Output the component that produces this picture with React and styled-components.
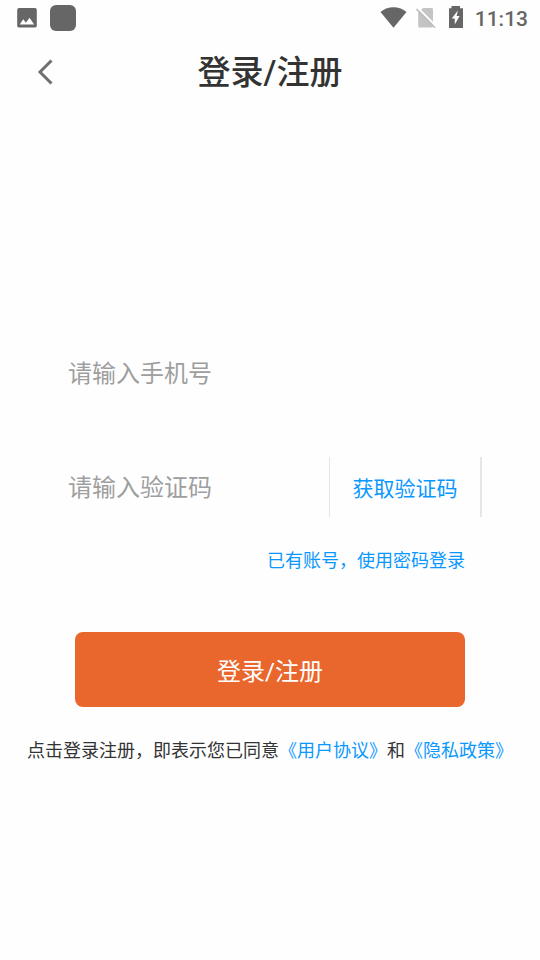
import { useState } from "react";
import styled, { createGlobalStyle } from "styled-components";

//STYLE

const GlobalStyle = createGlobalStyle`
  * {
    box-sizing: border-box;
  }
  body {
    margin: 0;
    background: #fefefe;
    color: #333;
    font-family: Roboto, "Noto Sans CJK SC", sans-serif;
  }
  button {
    border: none;
    padding: 0;
    background: none;
    font-family: inherit;
    cursor: pointer;
  }
`;

const Page = styled.div`
  display: flex;
  flex-direction: column;
  min-height: 100vh;
`;

const StatusBar = styled.div`
  display: flex;
  align-items: center;
  justify-content: space-between;
  height: 36px;
  padding: 0 12px 0 16px;
  color: #666;
`;

const StatusGroup = styled.div`
  display: flex;
  align-items: center;
  gap: ${({ $gap }) => $gap}px;
`;

const AppBadge = styled.span`
  width: 26px;
  height: 26px;
  border-radius: 6px;
  background: #666;
`;

const Clock = styled.span`
  padding-top: 2px;
  font-size: 21px;
  font-weight: 500;
  line-height: 34px;
`;

const Header = styled.header`
  display: grid;
  grid-template-columns: 90px 1fr 90px;
  align-items: center;
  height: 72px;
`;

const BackButton = styled.button`
  display: flex;
  align-items: center;
  justify-content: center;
  height: 72px;
`;

const Title = styled.h1`
  margin: 0;
  padding-top: 2px;
  font-size: 33px;
  font-weight: 500;
  line-height: 48px;
  text-align: center;
`;

const Form = styled.form`
  display: flex;
  flex-direction: column;
  padding-top: 235px;
`;

const Field = styled.div`
  display: flex;
  height: 60px;
  margin: 0 58px 54px 68px;
`;

const Input = styled.input`
  flex: 1;
  min-width: 0;
  padding: 2px 0 0;
  border: none;
  outline: none;
  background: transparent;
  color: #333;
  font-family: inherit;
  font-size: 24px;

  &::placeholder {
    color: #9e9e9e;
    opacity: 1;
  }
`;

const CodeButton = styled.button`
  width: 153px;
  border-left: 1px solid #e6e6e6;
  border-right: 2px solid #e6e6e6;
  color: #0a98ff;
  font-size: 21px;
`;

const PasswordLink = styled.a`
  align-self: flex-end;
  margin: -24px 75px 0 0;
  color: #0a98ff;
  font-size: 18px;
  line-height: 28px;
  text-decoration: none;
`;

const SubmitButton = styled.button`
  height: 75px;
  margin: 57px 75px 0;
  border-radius: 8px;
  background: #e9672d;
  color: #fff;
  font-size: 24px;
`;

const Agreement = styled.p`
  margin: 30px 0 0;
  font-size: 18px;
  line-height: 28px;
  text-align: center;

  a {
    color: #0a98ff;
    text-decoration: none;
  }
`;

//END STYLE

const PictureIcon = () => (
  <svg width="22" height="22" viewBox="0 0 22 22" aria-hidden="true">
    <path
      fill="currentColor"
      fillRule="evenodd"
      d="M3 1h16a1.800 1.800 0 0 1 1.800 1.800v16A1.800 1.800 0 0 1 19 20.600H3a1.800 1.800 0 0 1-1.800-1.800v-16A1.800 1.800 0 0 1 3 1zM3.700 17.500h14.500l-4.700-6.700-3.600 4.900-2.700-3.400z"
    />
  </svg>
);

const WifiIcon = () => (
  <svg width="27" height="24" viewBox="0 0 27 24" aria-hidden="true">
    <path fill="currentColor" d="M13.500 21.700L.5 6C4 3 8.500 1.200 13.500 1.200S23 3 26.500 6z" />
  </svg>
);

const NoSimIcon = () => (
  <svg width="21" height="22" viewBox="0 0 21 22" aria-hidden="true">
    <path fill="#c4c4c4" d="M7 1h8.500A1.400 1.400 0 0 1 17 2.400v16.800a1.400 1.400 0 0 1-1.400 1.400H3.600a1.400 1.400 0 0 1-1.400-1.400V5.800z" />
    <path stroke="#fefefe" strokeWidth="2" d="M1.500 .6l19 19" />
    <path stroke="#bcbcbc" strokeWidth="1.600" d="M.4 2l18.600 18.800" />
  </svg>
);

const BatteryIcon = () => (
  <svg width="14" height="24" viewBox="0 0 14 24" aria-hidden="true">
    <path fill="currentColor" d="M2.500 0h8.500v2.200h3V22H0V2.200h2.500z" />
    <path fill="#fefefe" d="M8.800 4.500L2.800 12.500h3v6L10.600 10H7.600z" />
  </svg>
);

const BackIcon = () => (
  <svg width="16" height="26" viewBox="0 0 16 26" fill="none" aria-hidden="true">
    <path stroke="#707070" strokeWidth="3" d="M14.500 1.500L3 13l11.500 11.500" />
  </svg>
);

const Status = () => (
  <StatusBar>
    <StatusGroup $gap={12}>
      <PictureIcon />
      <AppBadge />
    </StatusGroup>
    <StatusGroup $gap={12}>
      <StatusGroup $gap={9}>
        <WifiIcon />
        <NoSimIcon />
      </StatusGroup>
      <BatteryIcon />
      <Clock>11:13</Clock>
    </StatusGroup>
  </StatusBar>
);

const App = () => {
  const [phone, setPhone] = useState("");
  const [code, setCode] = useState("");

  return (
    <Page>
      <GlobalStyle />
      <Status />
      <Header>
        <BackButton type="button" aria-label="返回">
          <BackIcon />
        </BackButton>
        <Title>登录/注册</Title>
      </Header>
      <Form onSubmit={(e) => e.preventDefault()}>
        <Field>
          <Input
            type="tel"
            aria-label="手机号"
            placeholder="请输入手机号"
            value={phone}
            onChange={(e) => setPhone(e.target.value)}
          />
        </Field>
        <Field>
          <Input
            type="text"
            inputMode="numeric"
            aria-label="验证码"
            placeholder="请输入验证码"
            value={code}
            onChange={(e) => setCode(e.target.value)}
          />
          <CodeButton type="button">获取验证码</CodeButton>
        </Field>
        <PasswordLink href="#password">已有账号，使用密码登录</PasswordLink>
        <SubmitButton type="submit">登录/注册</SubmitButton>
      </Form>
      <Agreement>
        点击登录注册，即表示您已同意<a href="#terms">《用户协议》</a>和<a href="#privacy">《隐私政策》</a>
      </Agreement>
    </Page>
  );
};

export default App;
